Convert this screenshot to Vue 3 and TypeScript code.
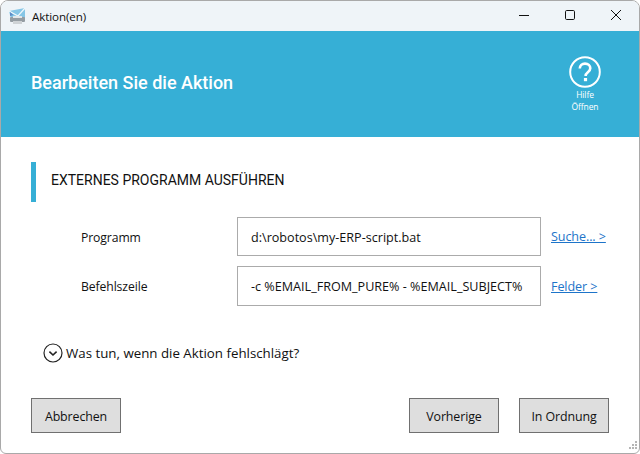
<script setup lang="ts">
const rows = [
  { label: 'Programm', value: 'd:\\robotos\\my-ERP-script.bat', link: 'Suche... >' },
  { label: 'Befehlszeile', value: '-c %EMAIL_FROM_PURE% - %EMAIL_SUBJECT%', link: 'Felder >' },
]
</script>

<template>
  <div class="window">
    <div class="titlebar">
      <svg class="app-icon" width="17" height="17" viewBox="0 0 17 17">
        <path d="M0 3 L16 0 L16 10 L2 11 Z" fill="#86c6e6" />
        <path d="M0 3 L9 8 L16 0" fill="none" stroke="#eef7fb" stroke-width="1.3" />
        <path d="M1 4 L4.5 7 L1 8 Z" fill="#5f8cc6" />
        <rect x="1" y="9" width="15" height="5" rx="1" fill="#959da3" />
        <rect x="4" y="8" width="9" height="2" fill="#e3e6e8" />
        <rect x="4" y="13" width="9" height="3" fill="#cfd3d6" />
      </svg>
      <span class="title">Aktion(en)</span>
      <div class="controls">
        <svg width="46" height="30" viewBox="0 0 46 30"><path d="M18 14.5 H28" stroke="#111" stroke-width="1" /></svg>
        <svg width="46" height="30" viewBox="0 0 46 30"><rect x="18.5" y="9.5" width="9" height="9" rx="1.2" fill="none" stroke="#111" stroke-width="1" /></svg>
        <svg width="46" height="30" viewBox="0 0 46 30"><path d="M18 9 L28 19 M28 9 L18 19" stroke="#111" stroke-width="1" /></svg>
      </div>
    </div>

    <header class="banner">
      <h1>Bearbeiten Sie die Aktion</h1>
      <div class="help">
        <svg width="32" height="32" viewBox="0 0 32 32">
          <circle cx="16" cy="16" r="14.8" fill="none" stroke="#fff" stroke-width="2" />
          <path d="M10.8 12.6 C10.8 9.4 13 7.6 16 7.6 C19.2 7.6 21.3 9.5 21.3 12.2 C21.3 14.4 20 15.4 18.6 16.5 C17.3 17.5 16.6 18.2 16.6 20" fill="none" stroke="#fff" stroke-width="2.6" />
          <rect x="14.9" y="22" width="3.2" height="3.2" fill="#fff" />
        </svg>
        <span>Hilfe</span>
        <span>Öffnen</span>
      </div>
    </header>

    <main class="body">
      <h2 class="section"><span>EXTERNES PROGRAMM AUSFÜHREN</span></h2>

      <div class="form">
        <div v-for="row in rows" :key="row.label" class="row">
          <span class="label">{{ row.label }}</span>
          <div class="input">{{ row.value }}</div>
          <a class="link">{{ row.link }}</a>
        </div>
      </div>

      <div class="toggle">
        <svg width="20" height="20" viewBox="0 0 20 20">
          <circle cx="10" cy="10" r="9" fill="none" stroke="#222" stroke-width="1.2" />
          <path d="M6.4 8.6 L10 12 L13.6 8.6" fill="none" stroke="#222" stroke-width="1.6" />
        </svg>
        <span>Was tun, wenn die Aktion fehlschlägt?</span>
      </div>

      <div class="actions">
        <button class="btn">Abbrechen</button>
        <div class="right">
          <button class="btn">Vorherige</button>
          <button class="btn">In Ordnung</button>
        </div>
      </div>
    </main>

    <svg class="grip" width="11" height="11" viewBox="0 0 11 11" fill="#b5b5b5">
      <rect x="8" y="0" width="2" height="2" />
      <rect x="5" y="3" width="2" height="2" /><rect x="8" y="3" width="2" height="2" />
      <rect x="2" y="6" width="2" height="2" /><rect x="5" y="6" width="2" height="2" /><rect x="8" y="6" width="2" height="2" />
    </svg>
  </div>
</template>

<style scoped>
.window {
  position: relative;
  box-sizing: border-box;
  width: 640px;
  height: 454px;
  display: flex;
  flex-direction: column;
  background: #fff;
  border: 1px solid #a9a9a9;
  border-radius: 8px 8px 6px 6px;
  overflow: hidden;
  font-family: "Open Sans", "Noto Sans", sans-serif;
  color: #111;
}
.titlebar {
  height: 30px;
  flex: none;
  display: flex;
  align-items: center;
  background: #eff4f8;
  padding-left: 8px;
}
.app-icon { flex: none; }
.title {
  margin-left: 6px;
  font-size: 11.6px;
  letter-spacing: -0.1px;
}
.controls {
  margin-left: auto;
  display: flex;
}
.banner {
  height: 106px;
  flex: none;
  background: #36afd6;
  display: flex;
  align-items: center;
  justify-content: space-between;
  padding: 0 29px 0 30px;
  color: #fff;
}
.banner h1 {
  margin: 0 0 4px;
  font-family: Roboto, sans-serif;
  font-size: 18px;
  font-weight: 500;
}
.help {
  width: 50px;
  display: flex;
  flex-direction: column;
  align-items: center;
  font-size: 8.5px;
  line-height: 12px;
  letter-spacing: -0.1px;
}
.help svg { margin-bottom: 1px; }
.body {
  flex: 1;
  display: flex;
  flex-direction: column;
  padding: 25px 30px 0;
}
.section {
  margin: 0;
  height: 40px;
  box-sizing: border-box;
  border-left: 5px solid #36afd6;
  padding-left: 15px;
  display: flex;
  align-items: center;
  font-family: Roboto, sans-serif;
  font-size: 14px;
  font-weight: 400;
}
.section span { margin-bottom: 4px; }
.form {
  margin-top: 15px;
  display: flex;
  flex-direction: column;
  gap: 10px;
}
.row {
  display: flex;
  align-items: center;
  height: 39px;
  padding-left: 50px;
}
.row + .row { height: 40px; }
.label {
  width: 156px;
  font-size: 12.2px;
  letter-spacing: -0.1px;
  padding-top: 1px;
}
.input {
  box-sizing: border-box;
  width: 304px;
  height: 100%;
  border: 1px solid #ababab;
  padding-left: 13px;
  padding-top: 1px;
  display: flex;
  align-items: center;
  font-size: 12.6px;
  white-space: nowrap;
}
.link {
  margin-left: 10px;
  font-size: 12.6px;
  letter-spacing: -0.1px;
  color: #1d74c9;
  text-decoration: underline;
}
.toggle {
  margin-top: 37px;
  margin-left: 12px;
  height: 20px;
  display: flex;
  align-items: center;
  gap: 3px;
  font-size: 13.3px;
}
.actions {
  margin-top: 35px;
  display: flex;
  justify-content: space-between;
}
.right {
  display: flex;
  gap: 20px;
}
.btn {
  box-sizing: border-box;
  width: 90px;
  height: 35px;
  padding: 1px 0 0;
  background: #dedede;
  border: 1px solid #707070;
  border-radius: 0;
  font-family: "Open Sans", sans-serif;
  font-size: 12.4px;
  letter-spacing: -0.1px;
  color: #111;
}
.grip {
  position: absolute;
  right: 1px;
  bottom: 1px;
}
</style>
